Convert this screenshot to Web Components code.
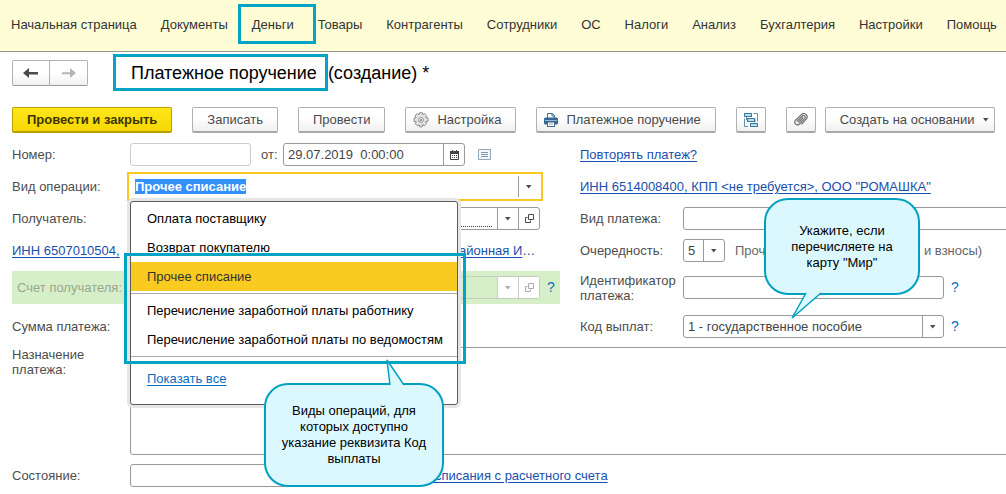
<!DOCTYPE html>
<html lang="ru">
<head>
<meta charset="utf-8">
<title>Платежное поручение (создание)</title>
<style>
html, body { margin: 0; }
body { font: 13px/15px "Liberation Sans", Arial, sans-serif; color: #4d4d4d; background: #fff; }
</style>
</head>
<body>
<payment-page></payment-page>
<script>
const icons = {
  left: '<svg width="16" height="12" viewBox="0 0 16 12"><path d="M0 6L6 1v4h9v2.600H6V11z" fill="#4a4a4a"/></svg>',
  right: '<svg width="16" height="12" viewBox="0 0 16 12"><path d="M15 6L9 1v4.200H1v2h8V11z" fill="#b5b5b5"/></svg>',
  gear: '<svg width="16" height="16" viewBox="0 0 16 16"><g fill="none" stroke="#8a8a8a"><path d="M6.500 .8h3l.4 1.900 1.600-1.100 2.200 2-1.100 1.800 2.400.6v3.200l-2.300.5 1 1.900-2.200 2.100-1.800-1.100-.6 2.300H6.700L6.200 12.800l-1.900 1-2.200-2.200 1.200-1.800L1 9.200V6.200l2.200-.6L2 3.700 4.200 1.600l1.800 1.100z" fill="#e3e3e3"/><circle cx="8" cy="7.900" r="2.400" fill="#fff"/></g><circle cx="8" cy="7.900" r="1" fill="#777"/></svg>',
  printer: '<svg width="14" height="14" viewBox="0 0 14 14"><path d="M3.500 5V.5h5L10.500 2.500V5" fill="#fff" stroke="#3f6a8c"/><path d="M8 .5V3h2.500" fill="none" stroke="#3f6a8c"/><rect y="4.500" width="14" height="7" rx="1.500" fill="#356890"/><path d="M1 7.500h12" stroke="#8fb9d6"/><rect x="3.500" y="9" width="7" height="4.500" fill="#fff" stroke="#3f6a8c"/><path d="M5 11h4" stroke="#9ab"/></svg>',
  tree: '<svg width="14" height="14" viewBox="0 0 14 14"><g fill="none" stroke="#5f91b3"><path d="M9.500 .5h4v8M.5 5.500v8H4M2.500 4v3h1M11 5.500v4"/></g><g fill="#b9dcea" stroke="#3b7ba3"><rect x=".5" y=".5" width="7" height="3"/><rect x="3.500" y="5.500" width="7" height="3"/><rect x="6.500" y="10.500" width="7" height="3"/></g></svg>',
  clip: '<svg width="14" height="14" viewBox="0 0 14 14"><path d="M3 8.500L8.300 3a1.700 1.700 0 0 1 2.500 2.300L5.500 11A2.700 2.700 0 0 1 1.600 7.200L7.300 1.700a3.300 3.300 0 0 1 4.900 4.500L7.500 11.400M4.500 9.500l4.700-5" fill="none" stroke="#707070" stroke-width="1.200"/></svg>',
  down: '<svg width="6" height="4" viewBox="0 0 6 4"><path d="M0 0h5.500L2.750 3.500z" fill="currentColor"/></svg>',
  open: '<svg width="9" height="9" viewBox="0 0 9 9"><path d="M3.500 .5h5v5h-5zM2.500 3.500h-2v5h5v-2" fill="none" stroke="currentColor"/></svg>',
  calendar: '<svg width="9" height="10" viewBox="0 0 9 10"><path d="M.5 2h8v7.500h-8z" fill="#fff" stroke="#444"/><path d="M0 1h9v3H0zM2 0h1v1H2zM6 0h1v1H6z" fill="#444"/><path d="M2 5.500h5M2 7.500h5" stroke="#444" stroke-dasharray="1 1"/></svg>',
  list: '<svg width="13" height="11" viewBox="0 0 13 11"><path d="M.5 .5h12v10H.5z" fill="#f4f8fb" stroke="#8ea9bb"/><path d="M3 3.500h7M3 5.500h7M3 7.500h7" stroke="#8397a5"/></svg>'
};

function define(name, css, html) {
  customElements.define(name, class extends HTMLElement {
    connectedCallback() {
      if (this.shadowRoot) return;
      const body = typeof html === 'function' ? html(this) : html;
      this.attachShadow({ mode: 'open' }).innerHTML = '<style>*{box-sizing:border-box}' + css + '</style>' + body;
    }
  });
}

/* Cyan highlight drawn over whatever is slotted into it */
define('mark-frame', `
  :host { display: block; position: relative; }
  .frame { position: absolute; inset: var(--reach); border: 3px solid #00a5c5; pointer-events: none; z-index: 2; }
`, '<slot></slot><div class="frame"></div>');

define('nav-bar', `
  nav { display: flex; justify-content: space-between; align-items: center; height: 52px; padding: 0 9px 2px 11px;
    background: #fffdd6; border-bottom: 1px solid #96958a; }
`, '<nav aria-label="Разделы"><slot></slot></nav>');

define('nav-item', `
  :host { display: block; white-space: nowrap; }
  a { color: #333; text-decoration: none; }
`, '<a href="#"><slot></slot></a>');

define('history-buttons', `
  :host { display: flex; }
  button { width: 38px; height: 26px; padding: 0; border: 1px solid #b3b3b3; border-bottom-color: #999; background: linear-gradient(#fff 50%, #f0f0f0);
    display: flex; align-items: center; justify-content: center; border-radius: 2px 0 0 2px; }
  button + button { border-left: 0; border-radius: 0 2px 2px 0; }
`, `<button aria-label="Назад">${icons.left}</button><button aria-label="Вперед">${icons.right}</button>`);

define('tool-button', `
  :host { display: block; flex: none; }
  button { display: flex; align-items: center; justify-content: center; gap: 8px; height: 26px; padding: 0 14px; white-space: nowrap;
    font: inherit; color: #4a4a4a; border: 1px solid #b0b0b0; border-bottom: 2px solid #a8a8a8; border-radius: 2px;
    background: linear-gradient(#fff 40%, #f0f0f0); }
  :host([icon]) button { padding-left: 7px; }
  :host([square]) button { width: 30px; padding: 0; }
  :host([menu]) button { padding-right: 5px; }
  :host([primary]) button { font-weight: bold; color: #3d3500; border-color: #b9a000; background: linear-gradient(#ffe71c, #f6d700); }
`, el => `<button aria-label="${el.getAttribute('label') || el.textContent.trim()}">${icons[el.getAttribute('icon')] || ''}<slot></slot>${el.hasAttribute('menu') ? icons.down : ''}</button>`);

/* Labelled control; type is text, select or area */
define('form-field', `
  :host { display: flex; align-items: center; min-height: 23px; position: relative; }
  label { flex: none; width: var(--label, 118px); }
  .box { flex: 1; min-width: 0; display: flex; height: 23px; border: 1px solid #999; border-radius: 3px; background: #fff; }
  input, select, textarea { flex: 1; min-width: 0; width: 100%; font: inherit; color: #444; border: 0; outline: 0; margin: 0;
    padding: 0 4px; background: none; appearance: none; resize: none; }
  select { padding-right: 24px; }
  button, .arrow { flex: none; width: 21px; padding: 0; border: 0; border-left: 1px solid #999; background: none; color: #4a4a4a;
    display: flex; align-items: center; justify-content: center; }
  .arrow { margin-left: -21px; pointer-events: none; }
  :host([size]) .box { flex: none; width: var(--size); }
  :host([light]) .box { border-color: #ccc; }
  :host([required]) input { background: repeating-linear-gradient(90deg, #e00000 0 1px, #fff 1px 2px) 0 18px / 100% 1px no-repeat content-box; }
  :host([type=area]) { align-items: flex-start; }
  :host([type=area]) .box { height: 108px; }
  :host([bleed]) .box { margin-right: -8px; }
  :host([disabled]) { height: 33px; padding: 0 20px 0 5px; background: #d6efc8; color: #98a890; --label: 113px; }
  :host([disabled]) .box { border-color: #c3ccbe; background: none; }
  :host([disabled]) button { background: #fff; color: #aaa; border-color: #ccc; }
  :host([tall]) { height: 33px; }
  :host([active]) { z-index: 3; }
  :host([active]) .box { border-color: #fff; border-radius: 0; outline: 2px solid #f9c920; outline-offset: 1px; }
  :host([active]) input { flex: none; width: auto; field-sizing: content; height: 15px; margin: 3px 0 0 4px; padding: 0; font-weight: bold; color: #fff; background: #3391ff; }
  :host([active]) button { margin-left: auto; }
`, el => {
  const a = n => el.getAttribute(n) || '';
  const v = a('value'), type = a('type');
  const control = type === 'select' ? `<select id="c"><option>${v}</option></select><span class="arrow">${icons.down}</span>`
    : type === 'area' ? '<textarea id="c"></textarea>'
    : `<input id="c" value="${v}" ${el.hasAttribute('disabled') ? 'disabled' : ''}>`;
  const names = { down: 'Выбрать из списка', open: 'Открыть', calendar: 'Календарь' };
  const buttons = a('buttons').split(' ').filter(Boolean).map(n => `<button aria-label="${names[n]}">${icons[n]}</button>`).join('');
  return `<label for="c">${a('label')}</label><div class="box">${control}${buttons}</div><slot></slot>`;
});

define('help-link', `
  :host { display: block; width: 0; }
  a { display: block; width: 14px; padding-left: 7px; color: #0a6ebd; font-size: 14px; text-decoration: none; }
`, '<a href="#" aria-label="Справка">?</a>');

define('text-link', `
  :host { display: flex; align-items: center; height: 23px; white-space: nowrap; min-width: 0; }
  a { display: var(--link-display, inline); color: var(--link, #1a4fad); text-decoration: var(--line, underline); text-underline-offset: 2px; }
`, '<a href="#"><slot></slot></a>');

define('call-out', `
  :host { display: block; position: absolute; z-index: 5; color: #000; text-align: center; line-height: 16px; }
  .bubble { display: flex; align-items: center; justify-content: center; width: 100%; height: 100%; padding: 0 12px;
    background: #dbf8ff; border: 2px solid #00a0c0; border-radius: 24px; }
  svg { position: absolute; overflow: visible; }
  .up { left: 122px; top: -24px; } .down { left: 27px; bottom: -25px; }
  path { fill: #dbf8ff; stroke: #00a0c0; stroke-width: 1.500; stroke-linejoin: miter; }
`, el => `<div class="bubble"><div><slot></slot></div></div>` + (el.getAttribute('tail') === 'up'
  ? '<svg class="up" width="20" height="26"><path d="M4 26L1 1L18 26"/></svg>'
  : '<svg class="down" width="30" height="27"><path d="M15 0L1 25L30 0"/></svg>'));

define('operation-menu', `
  :host { display: block; position: absolute; left: 118px; top: 26px; width: 328px; border: 1px solid #5c5c5c; border-radius: 3px;
    background: #fff; box-shadow: 0 0 0 3px #e5e5e5; color: #000; }
  ul { list-style: none; margin: 0; padding: 2px 0 0; }
  li { height: 29px; padding: 7px 16px; white-space: nowrap; }
  li.current { background: #f9ca20; color: #333; }
  .line { height: 1px; margin: 2px 0; background: #aaa; }
  mark-frame { --reach: -9px -9px -7px -7px; }
  .more { height: 45px; padding: 8px 16px; --link: #0a6ebd; }
`, `<ul role="listbox"><li role="option">Оплата поставщику</li><li role="option">Возврат покупателю</li></ul>
  <mark-frame><ul style="padding:0"><li class="current" role="option">Прочее списание</li></ul><div class="line"></div>
  <ul style="padding:0"><li role="option">Перечисление заработной платы работнику</li><li role="option">Перечисление заработной платы по ведомостям</li></ul><div class="line"></div></mark-frame>
  <div class="more"><text-link>Показать все</text-link></div>`);

define('payment-page', `
  :host { display: block; overflow-x: hidden; }
  header { display: flex; align-items: center; height: 41px; padding-left: 12px; gap: 43px; }
  h1 { display: flex; gap: 11px; margin: 0; font-size: 18px; line-height: 22px; font-weight: normal; color: #000; white-space: nowrap; }
  h1 mark-frame { --reach: -8px -11px -7px -18px; }
  .money { --reach: -13px -22px -12px -14px; }
  .tools { display: flex; gap: 20px; padding: 14px 12px 10px; }
  .pair { display: flex; gap: 9px; }
  form { padding-left: 12px; }
  .columns { display: grid; grid-template-columns: minmax(0, 548px) 1fr; column-gap: 20px; }
  .column { display: flex; flex-direction: column; gap: 9px; position: relative; min-width: 0; }
  .right { --label: 103px; }
  .right > .help { margin-right: 62px; }
  .main { margin-right: 20px; }
  .number { display: flex; align-items: center; }
  .number form-field + form-field { --label: 22px; margin: 0 13px 0 10px; }
  .sum { height: 27px; line-height: 27px; }
  .code { min-height: 27px; }
  .payee { --line: none; --link-display: flex; }
  .payee u { text-underline-offset: 2px; }
  .payee .start { width: 447px; }
  .note { white-space: nowrap; margin-left: 10px; display: flex; color: #666; }
  .note .start { width: 189px; }
  .purpose { margin: 7px 0 9px; }
  .state { display: flex; gap: 29px; }
  .vid { left: 184px; top: 55px; width: 156px; height: 97px; }
  .ops { left: 252px; top: 240px; width: 180px; height: 104px; }
`, `
<nav-bar>
  <nav-item>Начальная страница</nav-item><nav-item>Документы</nav-item>
  <mark-frame class="money"><nav-item>Деньги</nav-item></mark-frame>
  <nav-item>Товары</nav-item><nav-item>Контрагенты</nav-item><nav-item>Сотрудники</nav-item><nav-item>ОС</nav-item>
  <nav-item>Налоги</nav-item><nav-item>Анализ</nav-item><nav-item>Бухгалтерия</nav-item><nav-item>Настройки</nav-item><nav-item>Помощь</nav-item>
</nav-bar>
<header>
  <history-buttons></history-buttons>
  <h1><mark-frame>Платежное поручение</mark-frame><span>(создание) *</span></h1>
</header>
<div class="tools">
  <tool-button primary>Провести и закрыть</tool-button>
  <tool-button>Записать</tool-button>
  <tool-button>Провести</tool-button>
  <tool-button icon="gear">Настройка</tool-button>
  <tool-button icon="printer">Платежное поручение</tool-button>
  <tool-button icon="tree" square label="Структура"></tool-button>
  <div class="pair"><tool-button icon="clip" square label="Файлы"></tool-button><tool-button menu>Создать на основании</tool-button></div>
</div>
<form>
  <div class="columns">
    <div class="column left">
      <div class="number">
        <form-field label="Номер:" size light style="--size:121px"></form-field>
        <form-field label="от:" size style="--size:182px" value="29.07.2019  0:00:00" buttons="calendar"></form-field>
        ${icons.list}
      </div>
      <form-field class="main" active label="Вид операции:" value="Прочее списание" buttons="down"><operation-menu></operation-menu></form-field>
      <form-field label="Получатель:" required size style="--size:410px" buttons="down open"></form-field>
      <text-link class="payee"><span class="start" style="width:447px"><u>ИНН 6507010504,</u></span><u>айонная И</u>…</text-link>
      <form-field disabled label="Счет получателя:" buttons="down open"><help-link></help-link></form-field>
      <div class="sum">Сумма платежа:</div>
      <call-out class="ops" tail="up">Виды операций, для<br>которых доступно<br>указание реквизита Код<br>выплаты</call-out>
    </div>
    <div class="column right">
      <text-link>Повторять платеж?</text-link>
      <text-link>ИНН 6514008400, КПП &lt;не требуется&gt;, ООО "РОМАШКА"</text-link>
      <form-field label="Вид платежа:" bleed></form-field>
      <form-field label="Очередность:" type="select" size style="--size:42px" value="5"><span class="note"><span class="start">Проч</span><span>и взносы)</span></span></form-field>
      <form-field class="help" label="Идентификатор платежа:" tall><help-link></help-link></form-field>
      <form-field class="help code" label="Код выплат:" type="select" value="1 - государственное пособие"><help-link></help-link></form-field>
      <call-out class="vid" tail="down">Укажите, если<br>перечисляете на<br>карту "Мир"</call-out>
    </div>
  </div>
  <form-field class="purpose" type="area" bleed label="Назначение<br>платежа:"></form-field>
  <div class="state">
    <form-field label="Состояние:" size style="--size:170px"></form-field>
    <text-link>Ввести документ списания с расчетного счета</text-link>
  </div>
</form>`);
</script>
</body>
</html>
